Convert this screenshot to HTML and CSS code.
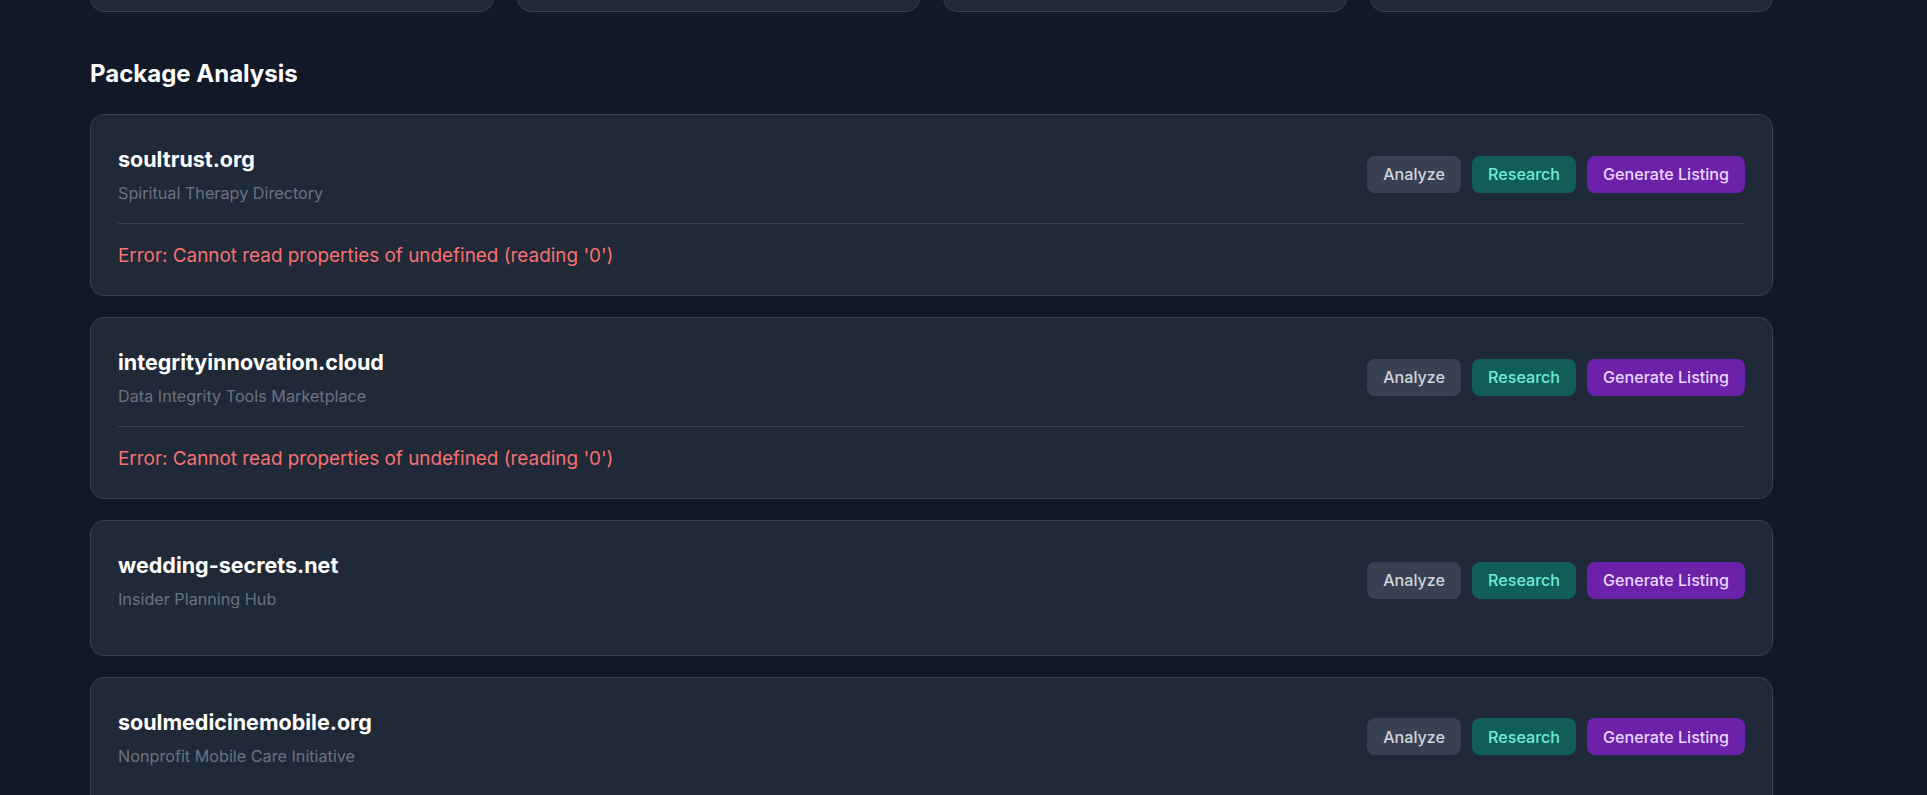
FILE: index.html
```html
<!DOCTYPE html>
<html lang="en">
<head>
<meta charset="utf-8">
<title>Package Analysis</title>
<link rel="stylesheet" href="styles.css">
</head>
<body>
<div class="page">
  <div class="stats">
    <div class="stat-card"></div>
    <div class="stat-card"></div>
    <div class="stat-card"></div>
    <div class="stat-card"></div>
  </div>

  <h2 class="section-title">Package Analysis</h2>

  <div class="package-list">
    <div class="package-card">
      <div class="package-head">
        <div class="package-info">
          <div class="package-name">soultrust.org</div>
          <div class="package-desc">Spiritual Therapy Directory</div>
        </div>
        <div class="actions">
          <button class="btn btn-analyze">Analyze</button>
          <button class="btn btn-research">Research</button>
          <button class="btn btn-generate">Generate Listing</button>
        </div>
      </div>
      <div class="package-result">
        <div class="error">Error: Cannot read properties of undefined (reading '0')</div>
      </div>
    </div>

    <div class="package-card">
      <div class="package-head">
        <div class="package-info">
          <div class="package-name">integrityinnovation.cloud</div>
          <div class="package-desc">Data Integrity Tools Marketplace</div>
        </div>
        <div class="actions">
          <button class="btn btn-analyze">Analyze</button>
          <button class="btn btn-research">Research</button>
          <button class="btn btn-generate">Generate Listing</button>
        </div>
      </div>
      <div class="package-result">
        <div class="error">Error: Cannot read properties of undefined (reading '0')</div>
      </div>
    </div>

    <div class="package-card">
      <div class="package-head">
        <div class="package-info">
          <div class="package-name">wedding-secrets.net</div>
          <div class="package-desc">Insider Planning Hub</div>
        </div>
        <div class="actions">
          <button class="btn btn-analyze">Analyze</button>
          <button class="btn btn-research">Research</button>
          <button class="btn btn-generate">Generate Listing</button>
        </div>
      </div>
    </div>

    <div class="package-card">
      <div class="package-head">
        <div class="package-info">
          <div class="package-name">soulmedicinemobile.org</div>
          <div class="package-desc">Nonprofit Mobile Care Initiative</div>
        </div>
        <div class="actions">
          <button class="btn btn-analyze">Analyze</button>
          <button class="btn btn-research">Research</button>
          <button class="btn btn-generate">Generate Listing</button>
        </div>
      </div>
    </div>
  </div>
</div>
</body>
</html>
```

FILE: styles.css
```css
* {
  box-sizing: border-box;
}

html, body {
  margin: 0;
  padding: 0;
  background: #111827;
  overflow: hidden;
}

body {
  font-family: Inter, "Noto Sans", "Liberation Sans", sans-serif;
  color: #f3f4f6;
}

.page {
  width: 1683px;
  margin-left: 90px;
  margin-top: -108px;
  padding-bottom: 200px;
}

.stats {
  display: grid;
  grid-template-columns: repeat(4, 1fr);
  gap: 23px;
}

.stat-card {
  height: 120px;
  background: #1f2937;
  border: 1px solid #374151;
  border-radius: 14px;
}

.section-title {
  margin: 46px 0 24px;
  font-size: 24px;
  line-height: 32px;
  font-weight: 700;
  color: #ffffff;
}

.package-list {
  display: flex;
  flex-direction: column;
  gap: 21px;
}

.package-card {
  background: #1f2937;
  border: 1px solid #374151;
  border-radius: 14px;
  padding: 28px 27px 26px;
}

.package-head {
  display: flex;
  align-items: center;
  justify-content: space-between;
  margin-bottom: 17.5px;
}

.package-name {
  font-size: 21.5px;
  line-height: 32px;
  font-weight: 700;
  color: #ffffff;
}

.package-desc {
  margin-top: 7px;
  font-size: 16.2px;
  line-height: 23px;
  color: #6b7280;
}

.actions {
  display: flex;
  gap: 11px;
}

.btn {
  height: 37px;
  padding: 0 16px;
  border: none;
  border-radius: 8px;
  font-family: Inter, "Noto Sans", "Liberation Sans", sans-serif;
  font-size: 16.1px;
  font-weight: 500;
  cursor: pointer;
}

.btn-analyze {
  background: #374151;
  color: #d1d5db;
}

.btn-research {
  background: #115e59;
  color: #6eecd6;
}

.btn-generate {
  background: #6b21a8;
  color: #e9d5ff;
}

.package-result {
  border-top: 1px solid #374151;
  padding-top: 18px;
}

.error {
  font-size: 18.9px;
  line-height: 27.6px;
  color: #f87171;
}
```
